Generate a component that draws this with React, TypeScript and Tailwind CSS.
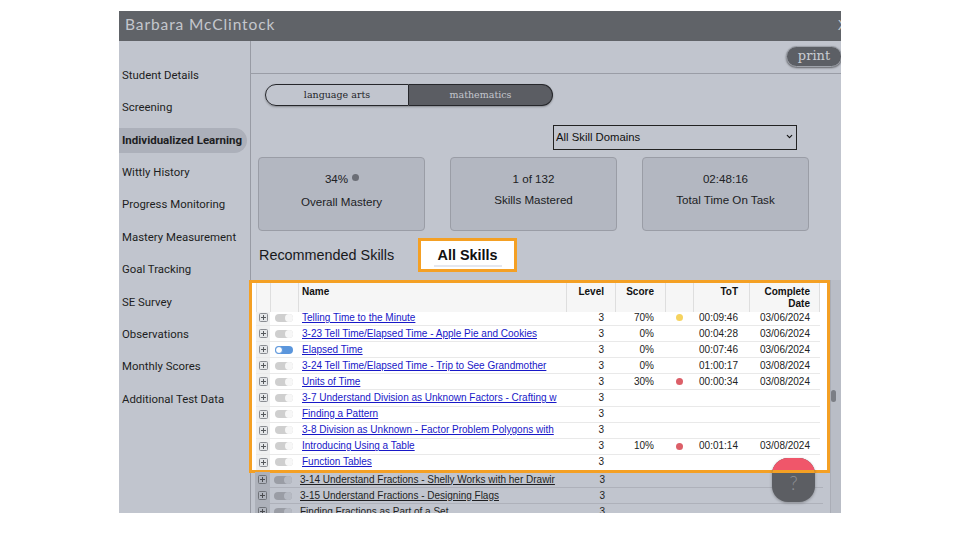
import React from "react";
import { ChevronDown } from "lucide-react";

type Row = { name: string; on?: boolean; score?: string; dot?: "y" | "r"; tot?: string; date?: string };

const brightRows: Row[] = [
  { name: "Telling Time to the Minute", score: "70%", dot: "y", tot: "00:09:46", date: "03/06/2024" },
  { name: "3-23 Tell Time/Elapsed Time - Apple Pie and Cookies", score: "0%", tot: "00:04:28", date: "03/06/2024" },
  { name: "Elapsed Time", on: true, score: "0%", tot: "00:07:46", date: "03/06/2024" },
  { name: "3-24 Tell Time/Elapsed Time - Trip to See Grandmother", score: "0%", tot: "01:00:17", date: "03/08/2024" },
  { name: "Units of Time", score: "30%", dot: "r", tot: "00:00:34", date: "03/08/2024" },
  { name: "3-7 Understand Division as Unknown Factors - Crafting w" },
  { name: "Finding a Pattern" },
  { name: "3-8 Division as Unknown - Factor Problem Polygons with" },
  { name: "Introducing Using a Table", score: "10%", dot: "r", tot: "00:01:14", date: "03/08/2024" },
  { name: "Function Tables" },
];

const dimRows: Row[] = [
  { name: "3-14 Understand Fractions - Shelly Works with her Drawir" },
  { name: "3-15 Understand Fractions - Designing Flags" },
  { name: "Finding Fractions as Part of a Set" },
];

const nav = [
  "Student Details",
  "Screening",
  "Individualized Learning",
  "Wittly History",
  "Progress Monitoring",
  "Mastery Measurement",
  "Goal Tracking",
  "SE Survey",
  "Observations",
  "Monthly Scores",
  "Additional Test Data",
];

function ExpandIcon({ dim }: { dim?: boolean }) {
  const c = dim ? "#6f7278" : "#8a8d92";
  return (
    <svg width="9" height="9" viewBox="0 0 9 9" className="block">
      <rect x="0.5" y="0.5" width="8" height="8" rx="1" fill={dim ? "#b0b4bd" : "#e4e6e8"} stroke={c} />
      <path d="M2 4.5h5M4.5 2v5" stroke={dim ? "#4a4c50" : "#55585c"} strokeWidth="1" />
    </svg>
  );
}

function Toggle({ on, dim }: { on?: boolean; dim?: boolean }) {
  if (on) {
    return (
      <div className="w-[18px] h-[8px] rounded-full bg-[#5b96dc] flex justify-start">
        <div className="w-[8px] h-[8px] rounded-full bg-white border border-[#5b96dc]" />
      </div>
    );
  }
  return (
    <div className={`w-[18px] h-[8px] rounded-full flex justify-end ${dim ? "bg-[#9a9da5]" : "bg-[#cfcfcf]"}`}>
      <div className={`w-[8px] h-[8px] rounded-full ${dim ? "bg-[#b6bac3]" : "bg-[#f7f7f7]"}`} />
    </div>
  );
}

function TableRow({ row, dim }: { row: Row; dim?: boolean }) {
  return (
    <div
      className={`grid h-[16.1px] items-center text-[10px] leading-none ${
        dim
          ? "grid-cols-[15px_26px_271px_49px_50px_28px_56px_71px] border-b border-[#aeb1ba] text-[#1e1f22]"
          : "grid-cols-[14px_28px_268px_49px_50px_28px_56px_71px] border-b border-[#e9e9e9] text-[#222]"
      }`}
    >
      <div className={`h-full flex items-center justify-center ${dim ? "bg-[#adb1ba]" : "bg-[#eff0f0]"}`}>
        <ExpandIcon dim={dim} />
      </div>
      <div className="flex justify-center">
        <Toggle on={row.on} dim={dim} />
      </div>
      <div className="pl-[4px]">
        <div className="w-[258px] whitespace-nowrap">
          <span className={`underline ${dim ? "text-[#1e1f22]" : "text-[#1818c8]"}`}>{row.name}</span>
        </div>
      </div>
      <div className="text-right pr-[11px]">3</div>
      <div className="text-right pr-[11px]">{row.score}</div>
      <div className="flex justify-center">
        {row.dot && <div className={`w-[7px] h-[7px] rounded-full ${row.dot === "y" ? "bg-[#f6d35f]" : "bg-[#dc5f68]"}`} />}
      </div>
      <div className="text-right pr-[11px]">{row.tot}</div>
      <div className="text-right pr-[10px]">{row.date}</div>
    </div>
  );
}

function TableHeader() {
  return (
    <div className="grid grid-cols-[14px_28px_268px_49px_50px_28px_56px_71px] h-[29px] bg-[#f6f6f6] font-bold text-[10px] leading-[12px] text-[#111]">
      <div className="border-l border-[#dedede]" />
      <div className="border-l border-[#dedede]" />
      <div className="border-l border-[#dedede] pl-[3px] pt-[3px]">Name</div>
      <div className="border-l border-[#dedede] text-right pr-[11px] pt-[3px]">Level</div>
      <div className="border-l border-[#dedede] text-right pr-[11px] pt-[3px]">Score</div>
      <div className="border-l border-[#dedede]" />
      <div className="border-l border-[#dedede] text-right pr-[11px] pt-[3px]">ToT</div>
      <div className="border-x border-[#dedede] text-right pr-[9px] pt-[3px]">
        Complete
        <br />
        Date
      </div>
    </div>
  );
}

function StatCard({ children, label }: { children: React.ReactNode; label: React.ReactNode }) {
  return (
    <div className="w-[167px] h-[74px] rounded-[4px] bg-[#b3b7c1] border border-[#9a9da6] flex flex-col items-center text-[11.6px] text-[#202124]">
      {children}
      {label}
    </div>
  );
}

export default function App() {
  return (
    <div className="w-[960px] h-[540px] bg-white overflow-hidden pt-[11px] pl-[119px]">
      <div
        className="relative w-[722px] h-[502px] overflow-hidden flex flex-col bg-[#c1c5ce]"
        style={{ fontFamily: '"Liberation Sans", Arial, sans-serif' }}
      >
        <div className="h-[30px] shrink-0 bg-[#606368] flex items-center justify-between pl-[6px] overflow-hidden">
          <span className="text-[15.5px] tracking-[0.9px] text-[#c4c7cd] mb-[2px]" style={{ fontFamily: 'Lato, sans-serif' }}>
            Barbara McClintock
          </span>
          <span className="text-[14px] text-[#c4c7cd] -mr-[6px] mb-[2px]">X</span>
        </div>

        <div className="flex flex-1 min-h-0">
          <nav
            className="w-[132px] shrink-0 border-r border-[#989ba4] pt-[18.5px] text-[11.4px] text-[#1d1e22]"
            style={{ fontFamily: 'Roboto, sans-serif' }}
          >
            {nav.map((n) => (
              <div key={n} className="h-[32.35px] flex items-center">
                {n === "Individualized Learning" ? (
                  <div className="w-[128px] h-[25px] rounded-r-full bg-[#acb0ba] pl-[3px] flex items-center font-bold whitespace-nowrap text-[11.5px]">
                    {n}
                  </div>
                ) : (
                  <div className="pl-[3px] whitespace-nowrap">{n}</div>
                )}
              </div>
            ))}
          </nav>

          <main className="flex-1 min-w-0 -ml-[1px] flex flex-col">
            <div className="h-[33px] shrink-0 border-b border-[#9a9da6] flex justify-end items-start pt-[5px]">
              <div
                className="w-[56px] h-[21px] rounded-full -mr-[1px] bg-[#5c5f65] border border-[#9fa3ab] shadow-[0_1px_2px_rgba(0,0,0,0.5)] text-[#c9ccd2] text-[13px] leading-[18px] text-center"
                style={{ fontFamily: '"DejaVu Serif", serif' }}
              >
                print
              </div>
            </div>

            <div
              className="mt-[10px] ml-[15px] w-[288px] h-[22px] shrink-0 flex text-[9.5px] shadow-[0_1px_2px_rgba(0,0,0,0.3)] rounded-full"
              style={{ fontFamily: '"DejaVu Serif", serif' }}
            >
              <div className="w-[144px] rounded-l-full border border-[#26272b] flex items-center justify-center text-[#25262a]">
                language arts
              </div>
              <div className="w-[144px] rounded-r-full border border-l-0 border-[#26272b] bg-[#5b5d63] flex items-center justify-center text-[#c3c6cd]">
                mathematics
              </div>
            </div>

            <div className="mt-[18px] ml-[303px] shrink-0 relative w-[244px]">
              <select className="w-[244px] h-[25px] border border-[#222] bg-transparent text-[11.3px] text-[#111] pl-[2px] appearance-none">
                <option>All Skill Domains</option>
              </select>
              <ChevronDown className="absolute right-[3px] top-[8px] w-[9px] h-[9px] text-[#111] pointer-events-none" strokeWidth={3} />
            </div>

            <div className="mt-[7px] ml-[8px] flex gap-[25px] shrink-0">
              <StatCard label={<div className="mt-[9px] leading-[14px]">Overall Mastery</div>}>
                <div className="mt-[14px] leading-[14px] flex items-center gap-[4px] pl-[1px]">
                  34%
                  <span className="w-[7px] h-[7px] rounded-full bg-[#6b6e76] mb-[2px]" />
                </div>
              </StatCard>
              <StatCard label={<div className="mt-[7px] leading-[14px]">Skills Mastered</div>}>
                <div className="mt-[14px] leading-[14px]">1 of 132</div>
              </StatCard>
              <StatCard label={<div className="mt-[7px] leading-[14px]">Total Time On Task</div>}>
                <div className="mt-[14px] leading-[14px]">02:48:16</div>
              </StatCard>
            </div>

            <div className="mt-[7px] ml-[9px] h-[34px] shrink-0 flex items-center">
              <span className="text-[14.4px] text-[#17181b] w-[159px] pt-[2px]">Recommended Skills</span>
              <div className="w-[99px] h-[34px] border-[3px] border-[#f4a024] bg-white flex flex-col items-center">
                <span className="text-[14.4px] font-bold text-[#111] leading-[28px] h-[26px] border-b-[2px] border-[#e4e7ef] px-[4px]">
                  All Skills
                </span>
              </div>
            </div>

            <div className="mt-[8px] flex-1 min-h-0 flex -ml-[1px]">
              <div className="w-[581px] shrink-0 flex flex-col">
                <div className="h-[193px] shrink-0 border-[3px] border-[#f4a024] bg-white pl-[4px] pr-[7px] overflow-hidden">
                  <TableHeader />
                  <div className="h-[158px] overflow-hidden">
                    <div className="-mt-[2px]">
                      {brightRows.map((r) => (
                        <TableRow key={r.name} row={r} />
                      ))}
                    </div>
                  </div>
                </div>
                <div className="pl-[6px] pr-[7px] -mt-[3px] pt-[2px]">
                  {dimRows.map((r) => (
                    <TableRow key={r.name} row={r} dim />
                  ))}
                </div>
              </div>
              <div className="flex-1 flex flex-col bg-[#b9bdc6] border-l border-[#aaadb6]">
                <div className="mt-[110px] w-[5px] h-[12px] rounded-full bg-[#7b7e85]" />
              </div>
            </div>
          </main>
        </div>

        <div className="absolute left-[653px] top-[447px] w-[43px] h-[44px] rounded-[16px] overflow-hidden flex flex-col bg-[#5c5e63] shadow-[0_1px_3px_rgba(0,0,0,0.3)]">
          <div className="h-[12px] shrink-0 bg-[#f0566a]" />
          <div className="h-[3px] shrink-0 bg-[#f4a024]" />
          <div className="flex-1 flex items-start justify-center text-[19px] leading-[19px] text-[#8d9096] font-light" style={{ fontFamily: 'Lato, sans-serif' }}>?</div>
        </div>
      </div>
    </div>
  );
}
